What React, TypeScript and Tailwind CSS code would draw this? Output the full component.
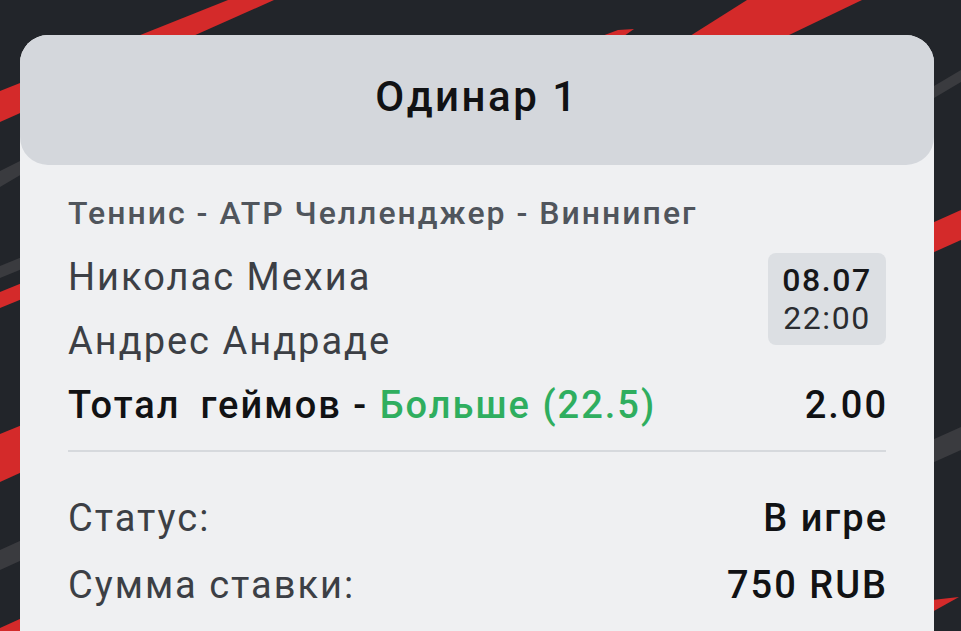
import React from "react";

function Background() {
  const red = "#d42a2a";
  const gray = "#3a3b3f";
  return (
    <svg
      className="absolute inset-0"
      width="961"
      height="631"
      viewBox="0 0 961 631"
      aria-hidden="true"
    >
      {/* top stripes */}
      <polygon points="228,0 274,0 0,122 0,91" fill={red} />
      <polygon points="747,0 862,0 787,36 690,36" fill={red} />
      <polygon points="618,30 634,29 624,36 602,36" fill={red} />
      <polygon points="961,70 961,82 934,98 934,86" fill={gray} />
      {/* left stripes */}
      <polygon points="0,171 22,160 22,174 0,187" fill={gray} />
      <polygon points="0,266 22,257 22,269 0,278" fill={gray} />
      <polygon points="0,292 22,283 22,299 0,308" fill={red} />
      <polygon points="0,434 22,425 22,472 0,482" fill={red} />
      <polygon points="0,550 22,540 22,560 0,570" fill={gray} />
      <polygon points="0,628 22,618 22,631 0,631" fill={red} />
      {/* right stripes */}
      <polygon points="961,210 961,240 932,253 932,223" fill={red} />
      <polygon points="961,427 961,450 932,463 932,440" fill={gray} />
      <polygon points="932,600 959,597 932,612" fill={red} />
    </svg>
  );
}

export default function App() {
  return (
    <div className="relative w-[961px] h-[631px] overflow-hidden bg-[#22252a] font-[Roboto,sans-serif]">
      <Background />
      <div className="relative pt-[35px] pl-[20px] pr-[27px]">
        <div className="rounded-[28px] bg-[#eff0f2] h-[640px]">
          <div className="h-[130px] pb-[6px] rounded-[28px] bg-[#d4d7dc] flex items-center justify-center">
            <span className="text-[42px] font-medium text-[#111214] leading-none tracking-[2.5px]">
              Одинар 1
            </span>
          </div>
          <div className="px-[48px] pt-[16px]">
            <div className="h-[64px] flex items-center text-[32px] font-medium text-[#50555c] tracking-[2px]">
              Теннис - АТР Челленджер - Виннипег
            </div>
            <div className="flex justify-between">
              <div className="flex flex-col">
                <div className="h-[64px] flex items-center text-[38px] text-[#3c3f45] tracking-[2px]">
                  Николас Мехиа
                </div>
                <div className="h-[64px] flex items-center text-[38px] text-[#3c3f45] tracking-[2px]">
                  Андрес Андраде
                </div>
              </div>
              <div className="mt-[8px] w-[118px] h-[92px] rounded-[8px] bg-[#dcdfe3] flex flex-col items-center justify-center leading-[38px] tracking-[1.6px]">
                <span className="text-[32px] font-medium text-[#16171a]">08.07</span>
                <span className="text-[32px] text-[#2a2c30]">22:00</span>
              </div>
            </div>
            <div className="h-[64px] flex items-center justify-between text-[38px] font-medium text-[#111214] tracking-[2px]">
              <span>
                Тотал<span className="ml-[20px]">геймов</span> -{" "}
                <span className="text-[#2fae5f]">Больше (22.5)</span>
              </span>
              <span className="-mr-[2px]">2.00</span>
            </div>
            <div className="mt-[13px] h-[2px] bg-[#d6d9dd]" />
            <div className="mt-[33px] h-[66px] flex items-center justify-between text-[38px] tracking-[2px]">
              <span className="text-[#3c3f45]">Статус:</span>
              <span className="font-medium text-[#111214] -mr-[2px]">В игре</span>
            </div>
            <div className="h-[68px] flex items-center justify-between text-[38px] tracking-[2px]">
              <span className="text-[#3c3f45]">Сумма ставки:</span>
              <span className="font-medium text-[#111214] -mr-[2px]">750 RUB</span>
            </div>
          </div>
        </div>
      </div>
    </div>
  );
}
